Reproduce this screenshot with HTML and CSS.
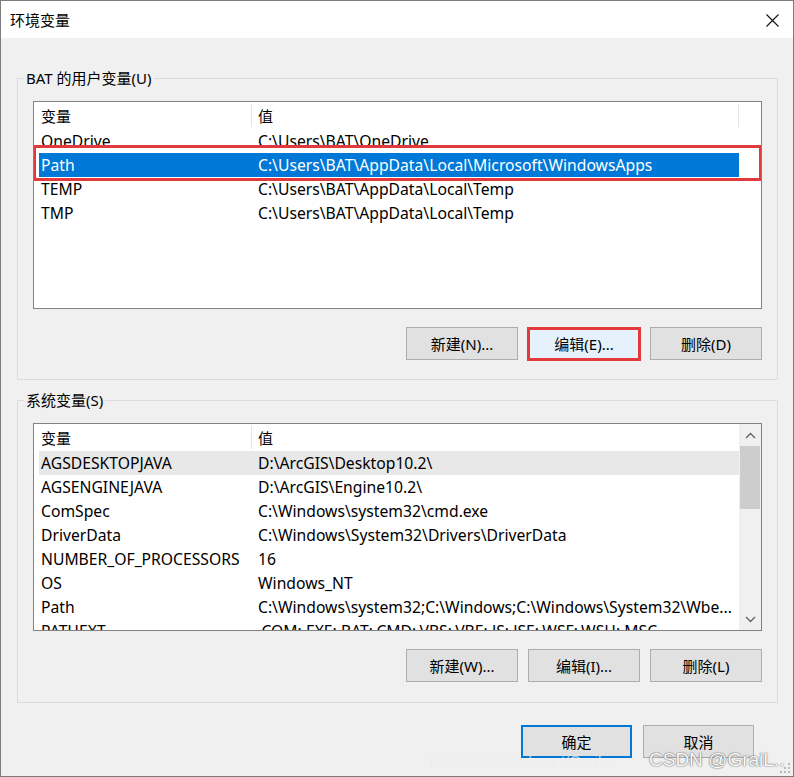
FILE: index.html
```html
<!DOCTYPE html>
<html lang="zh-CN">
<head>
<meta charset="utf-8">
<title>环境变量</title>
<link rel="stylesheet" href="styles.css">
</head>
<body>
<div class="window">
  <div class="titlebar">
    <span class="title">环境变量</span>
    <svg class="close" width="13" height="13" viewBox="0 0 13 13"><path d="M0.5 0.5 L12.5 12.5 M12.5 0.5 L0.5 12.5" stroke="#111" stroke-width="1.1" fill="none"/></svg>
  </div>
  <div class="content">
    <fieldset class="group">
      <legend>BAT 的用户变量(U)</legend>
      <div class="listbox">
        <div class="lv-main">
          <div class="lv-head"><span class="c1">变量</span><span class="c2">值</span></div>
          <div class="row"><span class="c1">OneDrive</span><span class="c2">C:\Users\BAT\OneDrive</span></div>
          <div class="row selected"><span class="c1">Path</span><span class="c2">C:\Users\BAT\AppData\Local\Microsoft\WindowsApps</span></div>
          <div class="row"><span class="c1">TEMP</span><span class="c2">C:\Users\BAT\AppData\Local\Temp</span></div>
          <div class="row"><span class="c1">TMP</span><span class="c2">C:\Users\BAT\AppData\Local\Temp</span></div>
        </div>
        <span class="mark mark-row"></span>
      </div>
      <div class="btns">
        <button class="btn">新建(N)...</button>
        <button class="btn hot">编辑(E)...<span class="mark mark-btn"></span></button>
        <button class="btn">删除(D)</button>
      </div>
    </fieldset>

    <fieldset class="group group2">
      <legend>系统变量(S)</legend>
      <div class="listbox">
        <div class="lv-main">
          <div class="lv-head"><span class="c1">变量</span><span class="c2 noline">值</span></div>
          <div class="row hover"><span class="c1">AGSDESKTOPJAVA</span><span class="c2">D:\ArcGIS\Desktop10.2\</span></div>
          <div class="row"><span class="c1">AGSENGINEJAVA</span><span class="c2">D:\ArcGIS\Engine10.2\</span></div>
          <div class="row"><span class="c1">ComSpec</span><span class="c2">C:\Windows\system32\cmd.exe</span></div>
          <div class="row"><span class="c1">DriverData</span><span class="c2">C:\Windows\System32\Drivers\DriverData</span></div>
          <div class="row"><span class="c1">NUMBER_OF_PROCESSORS</span><span class="c2">16</span></div>
          <div class="row"><span class="c1">OS</span><span class="c2">Windows_NT</span></div>
          <div class="row"><span class="c1">Path</span><span class="c2">C:\Windows\system32;C:\Windows;C:\Windows\System32\Wbe...</span></div>
          <div class="row"><span class="c1">PATHEXT</span><span class="c2">.COM;.EXE;.BAT;.CMD;.VBS;.VBE;.JS;.JSE;.WSF;.WSH;.MSC</span></div>
        </div>
        <div class="scrollbar">
          <div class="sb-btn"><svg width="11" height="7" viewBox="0 0 11 7"><path d="M1 6 L5.5 1.5 L10 6" stroke="#606060" stroke-width="1.3" fill="none"/></svg></div>
          <div class="sb-thumb"></div>
          <div class="sb-track"></div>
          <div class="sb-btn"><svg width="11" height="7" viewBox="0 0 11 7"><path d="M1 1 L5.5 5.5 L10 1" stroke="#606060" stroke-width="1.3" fill="none"/></svg></div>
        </div>
      </div>
      <div class="btns">
        <button class="btn">新建(W)...</button>
        <button class="btn">编辑(I)...</button>
        <button class="btn">删除(L)</button>
      </div>
    </fieldset>

    <div class="footer">
      <button class="btn default">确定</button>
      <button class="btn">取消</button>
    </div>
  </div>

  <div class="watermark">
    <span class="wm-url">https://blog.csdn.net/GraiL_</span>
    <span class="wm-csdn">CSDN @GraiL..</span>
  </div>
  <svg class="grip" width="12" height="12" viewBox="0 0 12 12">
    <rect x="9" y="1" width="2" height="2" fill="#b8b8b8"/>
    <rect x="5" y="5" width="2" height="2" fill="#b8b8b8"/>
    <rect x="9" y="5" width="2" height="2" fill="#b8b8b8"/>
    <rect x="1" y="9" width="2" height="2" fill="#b8b8b8"/>
    <rect x="5" y="9" width="2" height="2" fill="#b8b8b8"/>
    <rect x="9" y="9" width="2" height="2" fill="#b8b8b8"/>
  </svg>
</div>
</body>
</html>
```

FILE: styles.css
```css
html, body {
  margin: 0;
  padding: 0;
  background: #ffffff;
}

.window {
  position: relative;
  width: 794px;
  height: 777px;
  box-sizing: border-box;
  border: 1px solid #7c7c7c;
  background: #f0f0f0;
  font-family: "Noto Sans", "Noto Sans CJK SC", sans-serif;
  font-size: 15px;
  color: #000;
  overflow: hidden;
}

.titlebar {
  height: 37px;
  background: #ffffff;
  display: flex;
  align-items: center;
  justify-content: space-between;
  padding: 0 14px 0 9px;
}

.title {
  font-size: 15px;
  line-height: 20px;
  padding-top: 1px;
}

.close {
  display: block;
  margin-top: 1px;
}

.content {
  padding: 30px 15px 0 16px;
}

.group {
  margin: 0;
  padding: 13px 15px 19px 15px;
  border: 1px solid #dcdcdc;
  min-width: 0;
}

.group2 {
  margin-top: 10px;
  padding-bottom: 20px;
}

.group legend {
  padding: 0 2px;
  margin-left: -9px;
  line-height: 20px;
  font-size: 15px;
}

.listbox {
  position: relative;
  height: 208px;
  box-sizing: border-box;
  border: 1px solid #828282;
  background: #ffffff;
  display: flex;
  overflow: hidden;
}

.lv-main {
  flex: 1;
  min-width: 0;
  overflow: hidden;
}

.lv-head {
  height: 27px;
  display: flex;
  padding-left: 5px;
  align-items: flex-start;
}

.lv-head span {
  margin-top: 2px;
  height: 23px;
  box-sizing: border-box;
  line-height: 22px;
  padding-top: 1px;
  border-right: 1px solid #e5e5e5;
}

.lv-head .noline {
  border-right-color: transparent;
}

.c1 {
  width: 213px;
  padding-left: 2px;
  box-sizing: border-box;
  white-space: nowrap;
  overflow: hidden;
  flex: none;
}

.c2 {
  width: 487px;
  padding-left: 6px;
  box-sizing: border-box;
  white-space: nowrap;
  overflow: hidden;
  flex: none;
}

.row {
  display: flex;
  width: 700px;
  margin-left: 5px;
  height: 24px;
  line-height: 24px;
  font-size: 15.7px;
}

.row.selected {
  background: #0078d7;
  color: #ffffff;
}

.row.hover {
  background: #e8e8e8;
}

.scrollbar {
  width: 22px;
  flex: none;
  background: #f0f0f0;
  display: flex;
  flex-direction: column;
}

.sb-btn {
  height: 22px;
  display: flex;
  align-items: center;
  justify-content: center;
}

.sb-thumb {
  height: 63px;
  margin: 0 1px;
  background: #cdcdcd;
}

.sb-track {
  flex: 1;
}

.btns {
  display: flex;
  justify-content: flex-end;
  gap: 10px;
  margin-top: 18px;
}

.btn {
  position: relative;
  width: 112px;
  height: 33px;
  box-sizing: border-box;
  border: 1px solid #adadad;
  background: #e1e1e1;
  font-family: "Noto Sans", "Noto Sans CJK SC", sans-serif;
  font-size: 15px;
  color: #000;
  padding: 0;
  margin: 0;
}

.btn.hot {
  background: #e5f1fb;
  border-color: #0078d7;
}

.btn.default {
  border: 2px solid #0078d7;
}

.mark {
  position: absolute;
  box-sizing: border-box;
  border: 3px solid #e2393c;
  pointer-events: none;
}

.mark-row {
  left: -1px;
  right: -1px;
  top: 43px;
  height: 36px;
}

.mark-btn {
  left: -2px;
  right: -2px;
  top: -1px;
  bottom: -2px;
}

.footer {
  display: flex;
  justify-content: flex-end;
  gap: 11px;
  margin-top: 22px;
  margin-right: 24px;
}

.footer .btn {
  width: 111px;
}

.watermark {
  position: absolute;
  left: 430px;
  top: 749px;
  display: flex;
  align-items: baseline;
  pointer-events: none;
}

.wm-url {
  font-family: "Liberation Sans", sans-serif;
  font-size: 15px;
  color: rgba(255, 255, 255, 0.7);
  text-shadow: 0 0 1px rgba(0, 0, 0, 0.1);
  width: 218px;
  overflow: hidden;
  white-space: nowrap;
}

.wm-csdn {
  font-family: "Liberation Sans", sans-serif;
  font-size: 19px;
  line-height: 20px;
  color: #fbfbfb;
  text-shadow: 0 0 1px #555, 0 0 2px rgba(0, 0, 0, 0.45);
  white-space: nowrap;
}

.grip {
  position: absolute;
  right: 2px;
  bottom: 2px;
}
```
